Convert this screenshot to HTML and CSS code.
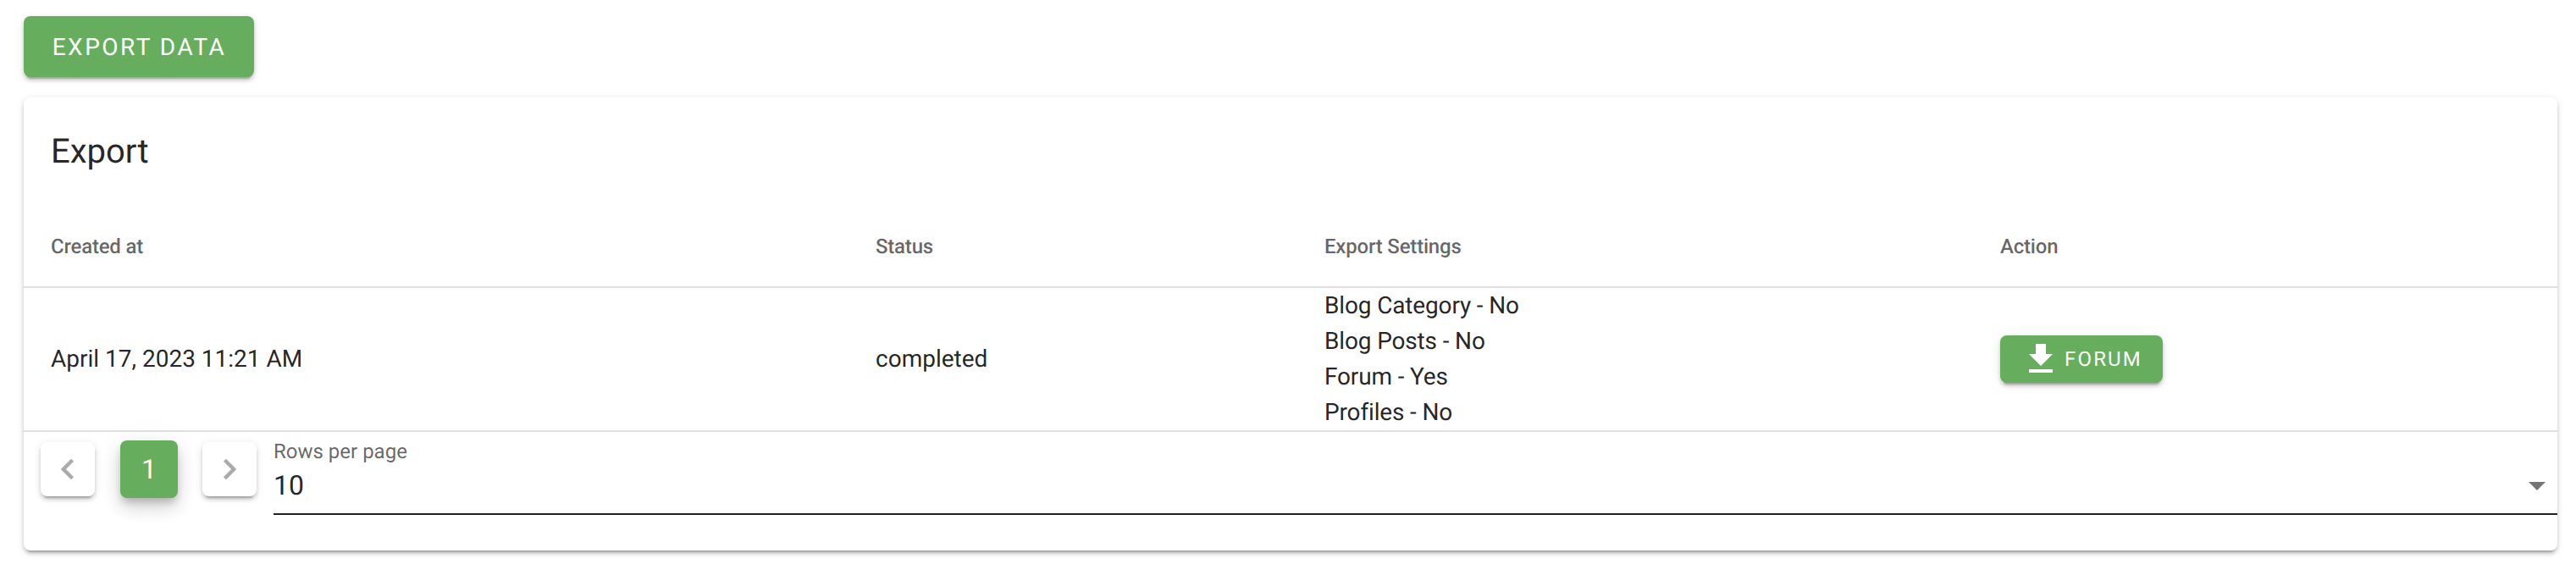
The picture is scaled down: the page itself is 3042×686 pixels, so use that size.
FILE: index.html
```html
<!DOCTYPE html>
<html lang="en">
<head>
<meta charset="utf-8">
<title>Export</title>
<link rel="stylesheet" href="styles.css">
</head>
<body>
<button class="btn btn-export" type="button">Export Data</button>
<section class="card">
  <h2 class="card-title">Export</h2>
  <table class="table">
    <thead>
      <tr>
        <th class="col-created">Created at</th>
        <th class="col-status">Status</th>
        <th class="col-settings">Export Settings</th>
        <th>Action</th>
      </tr>
    </thead>
    <tbody>
      <tr>
        <td>April 17, 2023 11:21 AM</td>
        <td>completed</td>
        <td class="settings-cell">
          <div>Blog Category - No</div>
          <div>Blog Posts - No</div>
          <div>Forum - Yes</div>
          <div>Profiles - No</div>
        </td>
        <td>
          <button class="btn btn-small" type="button">
            <svg class="btn-icon" viewBox="0 0 24 24" aria-hidden="true"><path d="M5,20H19V18H5M19,9H15V3H9V9H5L12,16L19,9Z"/></svg>
            Forum
          </button>
        </td>
      </tr>
    </tbody>
  </table>
  <div class="footer">
    <nav class="pagination">
      <button class="page-nav" type="button" aria-label="Previous page">
        <svg viewBox="0 0 24 24" aria-hidden="true"><path d="M15.41,16.58L10.83,12L15.41,7.41L14,6L8,12L14,18L15.41,16.58Z"/></svg>
      </button>
      <button class="page-current" type="button">1</button>
      <button class="page-nav" type="button" aria-label="Next page">
        <svg viewBox="0 0 24 24" aria-hidden="true"><path d="M8.59,16.58L13.17,12L8.59,7.41L10,6L16,12L10,18L8.59,16.58Z"/></svg>
      </button>
    </nav>
    <div class="select">
      <div class="select-label">Rows per page</div>
      <div class="select-value">
        <span>10</span>
        <svg class="select-arrow" viewBox="0 0 24 24" aria-hidden="true"><path d="M7,10L12,15L17,10H7Z"/></svg>
      </div>
    </div>
  </div>
</section>
</body>
</html>
```
FILE: styles.css
```css
* { box-sizing: border-box; }
html { margin: 0; background: #fff; min-height: 100%; }
body {
  margin: 0;
  min-height: 686px;
  padding: 19px 22px 0 28px;
  font-family: Roboto, "Liberation Sans", sans-serif;
  color: rgba(0, 0, 0, 0.87);
  text-rendering: geometricPrecision;
}
.btn {
  display: flex;
  align-items: center;
  justify-content: center;
  border: 0;
  border-radius: 8px;
  background: #66ad5e;
  color: #fff;
  font-family: inherit;
  font-weight: 400;
  text-transform: uppercase;
  text-rendering: geometricPrecision;
  box-shadow: 0 6px 2px -4px rgba(0,0,0,.2), 0 4px 4px 0 rgba(0,0,0,.14), 0 2px 10px 0 rgba(0,0,0,.12);
}
.btn-export {
  width: 272px;
  height: 72px;
  padding: 0 0 0 1px;
  font-size: 28px;
  letter-spacing: 2.5px;
}
.btn-small {
  width: 192px;
  height: 56px;
  font-size: 24px;
  letter-spacing: 2.14px;
}
.btn-icon {
  width: 48px;
  height: 48px;
  margin-right: 4px;
  fill: #fff;
}
.card {
  margin-top: 24px;
  height: 535px;
  border-radius: 8px;
  background: #fff;
  box-shadow: 0 6px 2px -4px rgba(0,0,0,.2), 0 4px 4px 0 rgba(0,0,0,.14), 0 2px 10px 0 rgba(0,0,0,.12);
}
.card-title {
  margin: 0;
  padding: 32px;
  font-size: 40px;
  font-weight: 400;
  line-height: 64px;
}
.table {
  width: 100%;
  border-collapse: separate;
  border-spacing: 0;
  table-layout: fixed;
}
.table th,
.table td {
  padding: 0 32px;
  text-align: left;
  border-bottom: 2px solid #e0e0e0;
}
.table th {
  height: 97px;
  font-size: 24px;
  font-weight: 500;
  letter-spacing: -0.2px;
  color: rgba(0, 0, 0, 0.6);
}
.table td {
  height: 170px;
  font-size: 28px;
  line-height: 42px;
}
.table .settings-cell { letter-spacing: -0.15px; }
.col-created { width: 974px; }
.col-status { width: 530px; }
.col-settings { width: 798px; }
.footer {
  display: flex;
  align-items: flex-start;
}
.pagination {
  display: flex;
  align-items: center;
  gap: 29px;
  padding: 10px 0 0 20px;
}
.page-nav,
.page-current {
  display: flex;
  align-items: center;
  justify-content: center;
  padding: 0;
  border: 0;
  border-radius: 8px;
  font-family: inherit;
}
.page-nav {
  width: 64px;
  height: 64px;
  background: #fff;
  box-shadow: 0 6px 2px -4px rgba(0,0,0,.2), 0 4px 4px 0 rgba(0,0,0,.14), 0 2px 10px 0 rgba(0,0,0,.12);
}
.page-nav svg {
  width: 48px;
  height: 48px;
  fill: #aaa;
  stroke: #aaa;
  stroke-width: 0.25;
}
.page-current {
  width: 68px;
  height: 68px;
  margin-left: 1px;
  background: #66ad5e;
  color: #fff;
  font-size: 32px;
  text-rendering: geometricPrecision;
  box-shadow: 0 6px 10px -2px rgba(0,0,0,.2), 0 12px 20px 0 rgba(0,0,0,.14), 0 2px 36px 0 rgba(0,0,0,.06);
}
.select {
  flex: 1;
  margin-left: 20px;
  padding-top: 7px;
}
.select-label {
  font-size: 24px;
  line-height: 32px;
  color: rgba(0, 0, 0, 0.6);
}
.select-value {
  display: flex;
  align-items: center;
  justify-content: space-between;
  height: 59px;
  padding-bottom: 10px;
  border-bottom: 2px solid #212121;
  font-size: 32px;
  line-height: 48px;
}
.select-arrow {
  width: 48px;
  height: 48px;
  fill: #757575;
}
```
